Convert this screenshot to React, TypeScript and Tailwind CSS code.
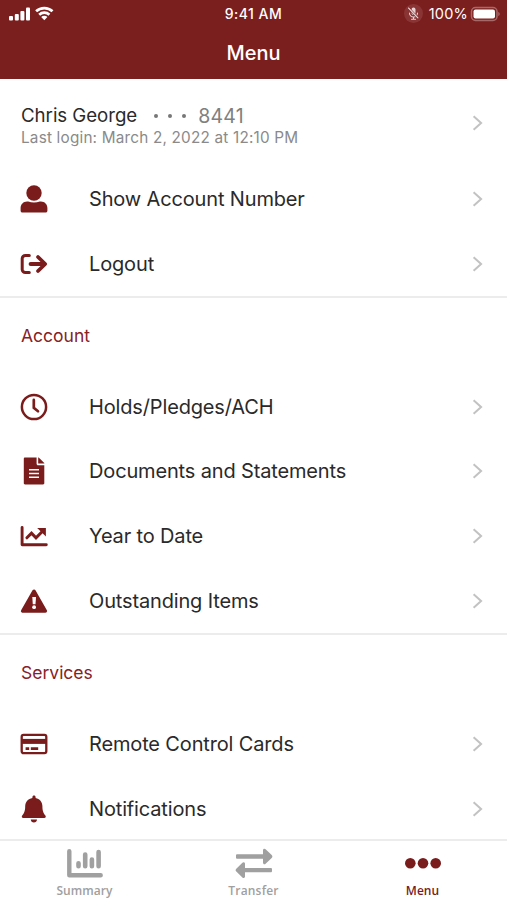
import type { ReactNode } from 'react';

const UserIcon = () => (
  <svg width="28" height="28" viewBox="0 0 28 28" fill="currentColor">
    <circle cx="14" cy="8" r="7.7" />
    <path d="M7 16.600h1.200c3.500 1.300 8.100 1.300 11.600 0H21c3.600 0 6.400 2.900 6.400 6.500v2.600c0 1-.8 1.800-1.800 1.800H2.400c-1 0-1.800-.8-1.800-1.800v-2.600c0-3.600 2.800-6.500 6.400-6.500z" />
  </svg>
);

const LogoutIcon = () => (
  <svg width="28" height="28" viewBox="0 0 28 28" fill="none" stroke="currentColor" strokeLinecap="round" strokeLinejoin="round">
    <path d="M9.300 5.400H5.400a3.200 3.200 0 0 0-3.200 3.200v10.800a3.200 3.200 0 0 0 3.200 3.200h3.900" strokeWidth="3" />
    <path d="M10.600 14H24" strokeWidth="4" />
    <path d="M18 7l7.200 7L18 21" strokeWidth="3.800" />
  </svg>
);

const ClockIcon = () => (
  <svg width="28" height="28" viewBox="0 0 28 28" fill="none" stroke="currentColor">
    <circle cx="14" cy="14" r="12.100" strokeWidth="2.500" />
    <path d="M13.800 6.900v8l4.200 3.300" strokeWidth="2.700" strokeLinecap="round" />
  </svg>
);

const DocumentIcon = () => (
  <svg width="28" height="28" viewBox="0 0 28 28" fill="currentColor">
    <path fillRule="evenodd" d="M5 .5h11.600v6.300c0 .9.600 1.500 1.500 1.500h6.200v18c0 .7-.5 1.200-1.200 1.200H5c-.7 0-1.200-.5-1.200-1.200V1.700C3.800 1 4.300.5 5 .5zM9 12v1.600h10V12zm0 3.700v1.600h10v-1.600zm0 3.700V21h10v-1.600z" />
    <path d="M18.200.5h.5l5.600 5.600v.5h-6.100z" />
  </svg>
);

const TrendIcon = () => (
  <svg width="28" height="28" viewBox="0 0 28 28" fill="none" stroke="currentColor">
    <path d="M2.100 5.500v17.200h24.200" strokeWidth="2.900" strokeLinecap="round" strokeLinejoin="round" />
    <path d="M6.900 15.800l4.600-4.600 4.500 4.600 6.300-6.300" strokeWidth="3" strokeLinecap="round" />
    <path d="M17.200 6h8.700v8.600z" fill="currentColor" stroke="none" />
  </svg>
);

const WarningIcon = () => (
  <svg width="28" height="28" viewBox="0 0 28 28">
    <path d="M14 4.200L2.600 24h22.800z" fill="currentColor" stroke="currentColor" strokeWidth="3.400" strokeLinejoin="round" />
    <path d="M12.300 10h3.700l-.5 7.200h-2.700z" fill="#fff" />
    <circle cx="14.100" cy="20.200" r="1.900" fill="#fff" />
  </svg>
);

const CardIcon = () => (
  <svg width="28" height="28" viewBox="0 0 28 28" fill="currentColor">
    <rect x="1.700" y="4.900" width="24.600" height="18.200" rx="1.800" fill="none" stroke="currentColor" strokeWidth="2.300" />
    <path d="M1.500 8.900h25v5h-25z" />
    <path d="M5.600 17.300h3.600v2.600H5.600zM10.800 17.300h7.400v2.600h-7.400z" />
  </svg>
);

const BellIcon = () => (
  <svg width="28" height="28" viewBox="0 0 28 28" fill="currentColor">
    <path d="M14 .4c.9 0 1.600.7 1.600 1.600v.9c4 .8 6.800 4.100 6.800 8.200 0 5.400 1.300 7.600 3 9.400.9 1 .2 2.500-1.100 2.500H3.300c-1.300 0-2-1.500-1.100-2.500 1.700-1.800 3-4 3-9.400 0-4.100 2.900-7.400 7.200-8.200V2c0-.9.700-1.600 1.600-1.600z" />
    <path d="M10.800 24.600H17c0 1.700-1.400 3-3.100 3s-3.100-1.300-3.100-3z" />
  </svg>
);

const Chevron = () => (
  <svg width="12" height="18" viewBox="0 0 12 18" fill="none" stroke="#c2c2c2" strokeWidth="2">
    <path d="M1.600 2.200L9.100 9l-7.500 6.800" />
  </svg>
);

interface RowProps {
  icon: ReactNode;
  label: string;
}

function MenuRow({ icon, label }: RowProps) {
  return (
    <button className="flex h-[64.75px] w-full items-center pl-5 pr-[23px] text-left">
      <span className="w-[69px] text-[#7b1c1c]">{icon}</span>
      <span className="flex-1 text-[20px] tracking-[-0.15px] text-[#2a2a2a]">{label}</span>
      <Chevron />
    </button>
  );
}

function SectionTitle({ children }: { children: ReactNode }) {
  return (
    <h2 className="flex h-[78.300px] items-center border-t-2 border-[#ececec] pl-[21px] text-[17.5px] text-[#872127]">
      {children}
    </h2>
  );
}

export default function App() {
  return (
    <div className="flex h-[900px] w-[507px] flex-col overflow-hidden bg-white font-['Inter',sans-serif]">
      {/* Header */}
      <header className="h-[79px] shrink-0 bg-[#7b1e1e] text-white">
        <div className="grid h-7 grid-cols-3 items-center px-2">
          <div className="-mt-[3px] flex items-center gap-1">
            <svg width="23" height="16" viewBox="0 0 23 16" fill="currentColor">
              <rect x="1" y="11" width="4" height="4.500" rx="1" />
              <rect x="6.800" y="9" width="4" height="6.500" rx="1" />
              <rect x="12.400" y="6" width="4" height="9.500" rx="1" />
              <rect x="18" y="2.500" width="4" height="13" rx="1" />
            </svg>
            <svg width="19" height="16" viewBox="0 0 19 16" fill="none" stroke="currentColor" strokeWidth="2.700">
              <path d="M1.100 6.300a12 12 0 0 1 16.400 0" />
              <path d="M4.200 9.700a7.500 7.500 0 0 1 10.200 0" />
              <path d="M9.300 15.200L6.200 12.100a4.400 4.400 0 0 1 6.200 0z" fill="currentColor" stroke="none" />
            </svg>
          </div>
          <div className="-mt-px text-center text-[14px] font-medium tracking-[0.45px]">9:41 AM</div>
          <div className="-mt-px flex items-center justify-end">
            <span className="mr-[6px] flex size-[19px] items-center justify-center rounded-full bg-[#8a3535]">
              <svg width="13" height="15" viewBox="0 0 13 15" fill="none" stroke="#ead2d2" strokeWidth="1.100" strokeLinecap="round">
                <rect x="4.500" y="1.500" width="4" height="7.500" rx="2" fill="#ead2d2" stroke="none" />
                <path d="M2.500 7a4 4 0 0 0 8 0M6.500 11v2M4.500 13.200h4" />
                <path d="M1.800 2.200l9.500 10" stroke="#7b1e1e" strokeWidth="2" />
                <path d="M1.500 2l9.500 10" />
              </svg>
            </span>
            <span className="mr-[2px] text-[14.500px] tracking-[0.2px]">100%</span>
            <svg className="-mr-[2px]" width="31" height="16" viewBox="0 0 31 16">
              <rect x="1.500" y="1.500" width="25.500" height="13" rx="4" fill="none" stroke="#a86868" strokeWidth="1.500" />
              <rect x="3.500" y="3.500" width="21.500" height="9" rx="2" fill="#fff" />
              <path d="M28.300 6c1.800.5 1.800 3.500 0 4z" fill="#ad7070" />
            </svg>
          </div>
        </div>
        <h1 className="mt-[9px] text-center text-[20px] leading-[32px] font-medium">Menu</h1>
      </header>

      {/* Menu list */}
      <main className="flex-1 overflow-hidden">
        <button className="flex h-[87.500px] w-full items-center pl-[21px] pr-[23px] text-left">
          <div className="mt-[5px] flex-1">
            <div className="flex items-center text-[18.700px] leading-[24px] tracking-[-0.05px] text-[#2a2a2a]">
              <span>Chris George</span>
              <span className="ml-[17px] flex gap-[10px]">
                <i className="size-1 rounded-full bg-[#777]" />
                <i className="size-1 rounded-full bg-[#777]" />
                <i className="size-1 rounded-full bg-[#777]" />
              </span>
              <span className="ml-3 text-[19.500px] tracking-[0.2px] text-[#808080]">8441</span>
            </div>
            <div className="text-[15.300px] leading-[19px] tracking-[0.2px] text-[#8a8a8a]">Last login: March 2, 2022 at 12:10 PM</div>
          </div>
          <Chevron />
        </button>

        <MenuRow icon={<UserIcon />} label="Show Account Number" />
        <MenuRow icon={<LogoutIcon />} label="Logout" />

        <SectionTitle>Account</SectionTitle>
        <MenuRow icon={<ClockIcon />} label="Holds/Pledges/ACH" />
        <MenuRow icon={<DocumentIcon />} label="Documents and Statements" />
        <MenuRow icon={<TrendIcon />} label="Year to Date" />
        <MenuRow icon={<WarningIcon />} label="Outstanding Items" />

        <SectionTitle>Services</SectionTitle>
        <MenuRow icon={<CardIcon />} label="Remote Control Cards" />
        <MenuRow icon={<BellIcon />} label="Notifications" />
      </main>

      {/* Bottom tabs */}
      <nav className="grid h-[61px] shrink-0 grid-cols-3 border-t-2 border-[#ececec] bg-white font-['Open_Sans',sans-serif] text-[12px] font-semibold text-[#a0a0a0]">
        <div className="flex flex-col items-center pt-[7px]">
          <svg width="38" height="30" viewBox="0 0 38 30" fill="none" stroke="currentColor" strokeLinecap="round" strokeLinejoin="round">
            <path d="M3.300 3.300v24h31.400" strokeWidth="4.400" />
            <path d="M12.500 15.300v3M19.200 6.500v11.800M25.900 11.500v6.800M32.600 4v14.300" strokeWidth="4.600" />
          </svg>
          <span className="mt-1 leading-[18px] tracking-[0.05px]">Summary</span>
        </div>
        <div className="flex flex-col items-center pt-[7px]">
          <svg width="38" height="30" viewBox="0 0 38 30" fill="currentColor">
            <path d="M2.300 6.300h25.700V2.200c0-1.500 1.600-2 2.600-1L36.700 7c.9.900.9 2 0 2.900l-6.100 5.900c-1 1-2.600.4-2.600-1v-4.100H2.300C1.500 10.700 1 10.200 1 9.400V7.600c0-.8.500-1.300 1.300-1.300z" />
            <path d="M35.700 19.900H10v-4.100c0-1.500-1.600-2-2.600-1L1.300 20.700c-.9.900-.9 2 0 2.900l6.100 5.900c1 1 2.600.4 2.600-1v-4.200h25.700c.8 0 1.300-.5 1.300-1.300v-1.800c0-.8-.5-1.300-1.300-1.300z" />
          </svg>
          <span className="mt-1 leading-[18px] tracking-[0.2px]">Transfer</span>
        </div>
        <div className="flex flex-col items-center pt-[7px] text-[#7b1c1c]">
          <svg width="38" height="30" viewBox="0 0 38 30" fill="currentColor">
            <circle cx="6.300" cy="15.200" r="5.300" />
            <circle cx="19" cy="15.200" r="5.300" />
            <circle cx="31.700" cy="15.200" r="5.300" />
          </svg>
          <span className="mt-1 leading-[18px] tracking-[0.05px]">Menu</span>
        </div>
      </nav>
    </div>
  );
}
